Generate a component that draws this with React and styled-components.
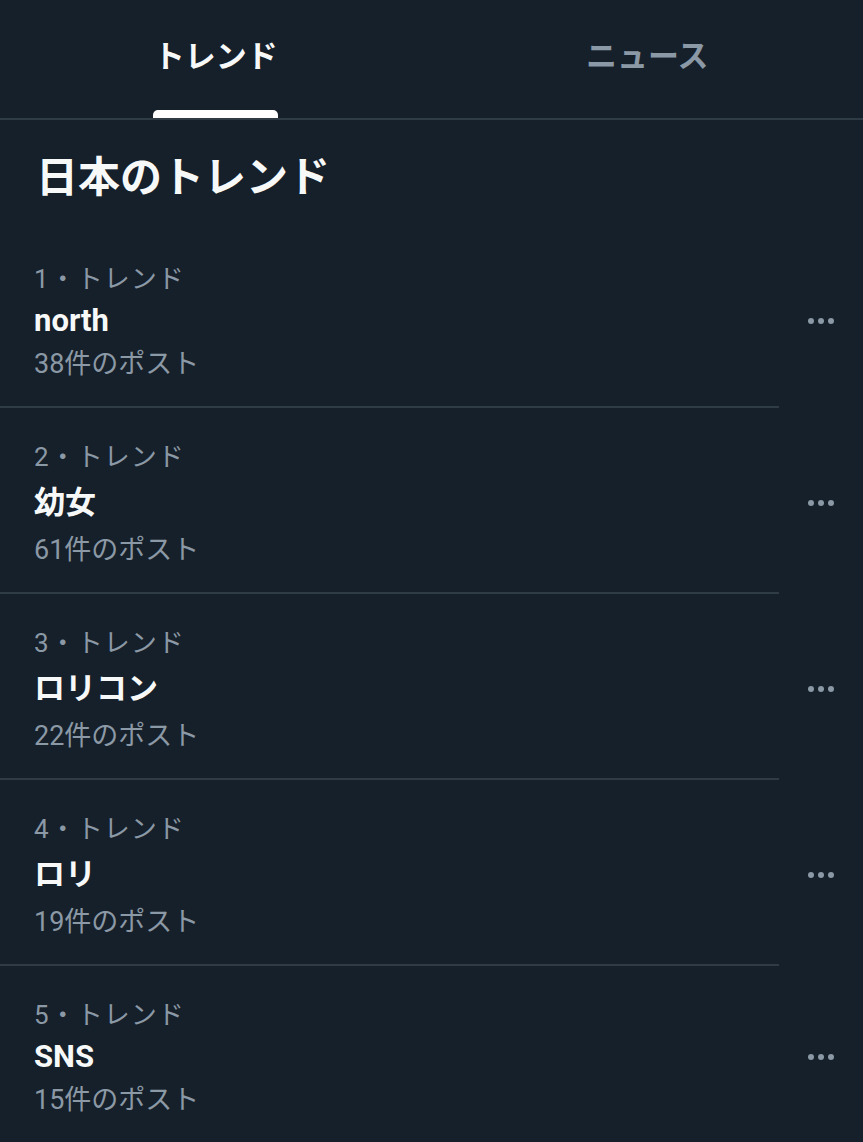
import styled, { createGlobalStyle } from "styled-components";

const GlobalStyle = createGlobalStyle`
  html, body {
    margin: 0;
    padding: 0;
    background: #16202a;
  }
  body {
    font-family: Roboto, "Noto Sans CJK JP", sans-serif;
    color: #f7f9f9;
  }
`;

const Screen = styled.div`
  width: 863px;
  height: 1142px;
  overflow: hidden;
  background: #16202a;
`;

/* Tabs */
const TabBar = styled.nav`
  display: grid;
  grid-template-columns: 1fr 1fr;
  height: 120px;
  box-sizing: border-box;
  border-bottom: 2px solid #2f3b45;
`;

const Tab = styled.div`
  display: flex;
  flex-direction: column;
  align-items: center;
  justify-content: space-between;
  padding-top: 37px;
  font-size: 31px;
  font-weight: 700;
  line-height: 40px;
  color: ${(props) => (props.active ? "#f7f9f9" : "#8b98a5")};
`;

const Indicator = styled.span`
  display: block;
  width: 125px;
  height: 8px;
  border-radius: 5px 5px 0 0;
  background: ${(props) => (props.active ? "#ffffff" : "transparent")};
`;

const Heading = styled.h2`
  margin: 0;
  padding: 33px 36px 27px;
  font-size: 42px;
  font-weight: 700;
  line-height: 50px;
`;

/* Trend rows */
const Row = styled.div`
  display: flex;
`;

const Body = styled.div`
  flex: 1;
  padding: 30px 34px 22px;
  border-bottom: 2px solid ${(props) => (props.last ? "transparent" : "#2f3b45")};
`;

const Meta = styled.div`
  font-size: 26px;
  line-height: 38px;
  color: #8b98a5;
  letter-spacing: 1px;
`;

const Name = styled.div`
  font-size: 31px;
  font-weight: 700;
  line-height: ${(props) => (props.latin ? "46px" : "54px")};
`;

const Count = styled.div`
  font-size: 27px;
  line-height: 40px;
  color: #8b98a5;
`;

const Menu = styled.div`
  width: 84px;
  display: flex;
  justify-content: center;
  align-items: center;
  padding-top: 4px;
`;

const Dots = () => (
  <svg width="28" height="8" viewBox="0 0 28 8">
    <circle cx="4" cy="4" r="3" fill="#8b98a5" />
    <circle cx="14" cy="4" r="3" fill="#8b98a5" />
    <circle cx="24" cy="4" r="3" fill="#8b98a5" />
  </svg>
);

const trends = [
  { name: "north", count: 38, latin: true },
  { name: "幼女", count: 61 },
  { name: "ロリコン", count: 22 },
  { name: "ロリ", count: 19 },
  { name: "SNS", count: 15, latin: true },
];

const App = () => {
  return (
    <Screen>
      <GlobalStyle />
      <TabBar>
        <Tab active>
          <span>トレンド</span>
          <Indicator active />
        </Tab>
        <Tab>
          <span>ニュース</span>
          <Indicator />
        </Tab>
      </TabBar>

      <Heading>日本のトレンド</Heading>

      {trends.map((t, i) => {
        const last = i === trends.length - 1;
        return (
          <Row key={t.name}>
            <Body last={last}>
              <Meta>{i + 1}・トレンド</Meta>
              <Name latin={t.latin}>{t.name}</Name>
              <Count>{t.count}件のポスト</Count>
            </Body>
            <Menu>
              <Dots />
            </Menu>
          </Row>
        );
      })}
    </Screen>
  );
};

export default App;
